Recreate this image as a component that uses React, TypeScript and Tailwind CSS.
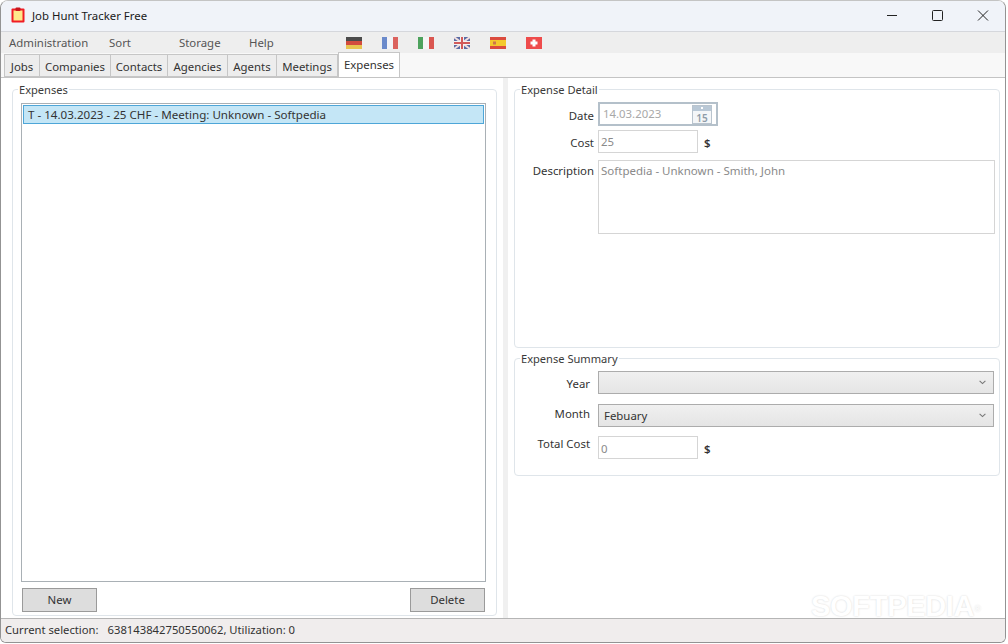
import type { ReactNode } from "react";

const tabs = [
  { name: "Jobs", width: "w-[36px]" },
  { name: "Companies", width: "w-[71px]" },
  { name: "Contacts", width: "w-[57px]" },
  { name: "Agencies", width: "w-[60px]" },
  { name: "Agents", width: "w-[49px]" },
  { name: "Meetings", width: "w-[61px]" },
];

function Flag({ children }: { children: ReactNode }) {
  return (
    <svg width="16" height="12" viewBox="0 0 16 12" className="mr-[20px] shrink-0 opacity-90">
      {children}
    </svg>
  );
}

function Flags() {
  return (
    <div className="flex items-center">
      <Flag>
        <rect width="16" height="4" fill="#3a3a3a" />
        <rect y="4" width="16" height="4" fill="#cf3a2c" />
        <rect y="8" width="16" height="4" fill="#e8c040" />
      </Flag>
      <Flag>
        <rect width="6" height="12" fill="#5d80c8" />
        <rect x="5" width="6" height="12" fill="#f4f4f8" />
        <rect x="11" width="5" height="12" fill="#d9534f" />
      </Flag>
      <Flag>
        <rect width="6" height="12" fill="#3c9a4e" />
        <rect x="5" width="6" height="12" fill="#f6f6f6" />
        <rect x="11" width="5" height="12" fill="#d8463f" />
      </Flag>
      <Flag>
        <rect width="16" height="12" fill="#4a5d9c" />
        <path d="M0 0 16 12M16 0 0 12" stroke="#f2dede" strokeWidth="2" />
        <path d="M8 0V12M0 6H16" stroke="#f4f4f4" strokeWidth="4" />
        <path d="M8 0V12M0 6H16" stroke="#cf4a4a" strokeWidth="2" />
      </Flag>
      <Flag>
        <rect width="16" height="12" fill="#d93a2b" />
        <rect y="3" width="16" height="6" fill="#f5c518" />
        <rect x="3" y="4.5" width="3" height="3" fill="#c96a3a" />
      </Flag>
      <Flag>
        <rect width="16" height="14" y="-1" rx="1" fill="#ee3a3a" />
        <path d="M6.5 2.5h3v2h2v3h-2v2h-3v-2h-2v-3h2z" fill="#fff" />
      </Flag>
    </div>
  );
}

function GroupBox({ title, className, children }: { title: string; className: string; children: ReactNode }) {
  return (
    <fieldset className={`rounded-[4px] border border-[#dfe5ea] pl-[5px] ${className}`}>
      <legend className="px-[1px] pt-[2px] text-[11.1px] leading-[16px] text-[#3a3a3a]">{title}</legend>
      {children}
    </fieldset>
  );
}

function Dropdown({ value }: { value?: string }) {
  return (
    <div className="flex h-[23px] w-[396px] items-center justify-between border border-[#acacac] bg-gradient-to-b from-[#f0f0f0] to-[#e5e5e5] pl-[5px] pr-[7px] text-[#333]">
      <span>{value}</span>
      <svg width="7" height="5" viewBox="0 0 7 5" fill="none">
        <path d="M0.6 0.8 3.5 3.6 6.4 0.8" stroke="#777" strokeWidth="1.1" />
      </svg>
    </div>
  );
}

export default function App() {
  return (
    <div className="h-[644px] w-[1008px] overflow-hidden bg-white font-['Noto_Sans','Open_Sans',sans-serif] text-[11.4px] text-[#333]">
      <div className="flex h-[643px] w-[1006px] flex-col overflow-hidden rounded-t-[8px] rounded-b-[6px] border border-[#939393] border-t-[#c4c4c4] bg-white">
        {/* title bar */}
        <div className="flex h-[30px] shrink-0 items-center bg-[#f0f3f9] pl-[10px]">
          <svg width="15" height="16" viewBox="0 0 15 16" className="mb-[2px]">
            <rect x="0.5" y="1.5" width="13" height="14" rx="1" fill="#f01c24" />
            <rect x="2.5" y="3.5" width="9" height="10" fill="#ffe98a" />
            <rect x="4.5" y="0.5" width="5" height="3.5" rx="1" fill="#c8161c" />
          </svg>
          <span className="ml-[6px] text-[#1a1a1a]">Job Hunt Tracker Free</span>
          <div className="ml-auto flex items-center">
            <svg width="46" height="30" viewBox="0 0 46 30">
              <path d="M20 14.5H30" stroke="#222" />
            </svg>
            <svg width="46" height="30" viewBox="0 0 46 30">
              <rect x="19.5" y="9.5" width="10" height="10" rx="1" fill="none" stroke="#222" />
            </svg>
            <svg width="46" height="30" viewBox="0 0 46 30">
              <path d="M19 9.5 29 19.5M29 9.5 19 19.5" stroke="#222" />
            </svg>
          </div>
        </div>

        {/* menu */}
        <div className="flex h-[22px] shrink-0 items-center border-t border-[#d5d7dc] bg-[#eeeeee] pl-[8px] text-[#555]">
          <span className="w-[100px]">Administration</span>
          <span className="w-[70px]">Sort</span>
          <span className="w-[70px]">Storage</span>
          <span className="w-[97px]">Help</span>
          <Flags />
        </div>

        {/* tabs */}
        <div className="flex h-[25px] shrink-0 items-end border-b border-[#c4c4c4] bg-[#f8f8f8] pl-[3px]">
          {tabs.map((tab) => (
            <div
              key={tab.name}
              className={`flex h-[23px] items-center justify-center border border-l-0 border-[#c6c6c6] bg-[#ededed] pt-[2px] first:border-l ${tab.width}`}
            >
              {tab.name}
            </div>
          ))}
          <div className="relative top-[1px] mb-[1px] flex h-[25px] w-[62px] items-start justify-center border border-b-0 border-[#c6c6c6] bg-white pt-[3px]">
            Expenses
          </div>
        </div>

        {/* content */}
        <div className="flex min-h-0 flex-1">
          <div className="flex w-[502px] shrink-0 pl-[11px] pt-[2px]">
            <GroupBox title="Expenses" className="h-[536px] w-[485px]">
              <div className="ml-[3px] mt-[5px] h-[479px] w-[465px] border border-[#a9b0b5] p-[1px]">
                <div className="flex h-[19px] items-center border border-[#4ea6d8] bg-[#c4e6f6] pl-[4px] text-[11.6px]">
                  T - 14.03.2023 - 25 CHF - Meeting: Unknown - Softpedia
                </div>
              </div>
              <div className="ml-[4px] mt-[6px] flex w-[463px] justify-between">
                <button className="h-[24px] w-[75px] border border-[#9a9a9a] bg-[#dddddd]">New</button>
                <button className="h-[24px] w-[75px] border border-[#9a9a9a] bg-[#dddddd]">Delete</button>
              </div>
            </GroupBox>
          </div>

          <div className="w-[5px] shrink-0 bg-[#f0f0f0]" />

          <div className="flex flex-col pl-[6px] pt-[2px]">
            <GroupBox title="Expense Detail" className="h-[268px] w-[486px]">
              <div className="mt-[4px] flex items-center">
                <span className="w-[74px] pt-[3px] text-right">Date</span>
                <div className="ml-[4px] flex h-[24px] w-[120px] items-center justify-between border-2 border-[#b4c0ca] pl-[3px] pr-[4px] text-[#a8a8a8]">
                  <span>14.03.2023</span>
                  <svg width="20" height="19" viewBox="0 0 20 19">
                    <rect x="0.5" y="0.5" width="19" height="18" fill="#f4f6f8" stroke="#b9c4ce" />
                    <rect x="1" y="1" width="18" height="5" fill="#b9c8d6" />
                    <rect x="9" y="2" width="2" height="2" fill="#fff" />
                    <text x="10" y="16.5" textAnchor="middle" fontSize="10" fontWeight="600" fill="#8f9ca8">15</text>
                  </svg>
                </div>
              </div>
              <div className="mt-[4px] flex items-center">
                <span className="w-[74px] pt-[3px] text-right">Cost</span>
                <div className="ml-[4px] flex h-[23px] w-[100px] items-center border border-[#d5d5d5] pl-[2px] text-[#8a8a8a]">25</div>
                <span className="ml-[6px] pt-[2px] font-semibold">$</span>
              </div>
              <div className="mt-[7px] flex items-start">
                <span className="w-[74px] pt-[2px] text-right">Description</span>
                <div className="ml-[4px] h-[74px] w-[397px] border border-[#d5d5d5] pl-[2px] pt-[1px] text-[11.5px] text-[#8a8a8a]">
                  Softpedia - Unknown - Smith, John
                </div>
              </div>
            </GroupBox>

            <GroupBox title="Expense Summary" className="mt-[1px] h-[127px] w-[486px]">
              <div className="mt-[4px] flex items-center">
                <span className="w-[70px] pt-[2px] text-right">Year</span>
                <div className="ml-[8px]"><Dropdown /></div>
              </div>
              <div className="mt-[10px] flex items-center">
                <span className="w-[70px] pb-[3px] text-right">Month</span>
                <div className="ml-[8px]"><Dropdown value="Febuary" /></div>
              </div>
              <div className="mt-[9px] flex items-start">
                <span className="w-[70px] leading-[15px] text-right">Total Cost</span>
                <div className="ml-[8px] flex h-[23px] w-[100px] items-center border border-[#d5d5d5] pl-[2px] pt-[2px] text-[#8a8a8a]">0</div>
                <span className="ml-[6px] pt-[4px] font-semibold">$</span>
              </div>
            </GroupBox>
          </div>
        </div>

        {/* status bar */}
        <div className="relative flex h-[24px] shrink-0 items-center border-t border-[#b5b5b5] bg-[#f0eded] pl-[4px] text-[11.25px]">
          <span>Current selection:</span>
          <span className="ml-[9px]">638143842750550062, Utilization: 0</span>
          <span className="absolute left-[810px] top-[-28px] font-['Liberation_Sans',sans-serif] text-[29px] font-bold leading-[30px] tracking-[-0.3px] text-white [text-shadow:0_0_2px_#d4d4d4]">
            SOFTPEDIA<sup className="text-[9px] font-normal">®</sup>
          </span>
        </div>
      </div>
    </div>
  );
}
